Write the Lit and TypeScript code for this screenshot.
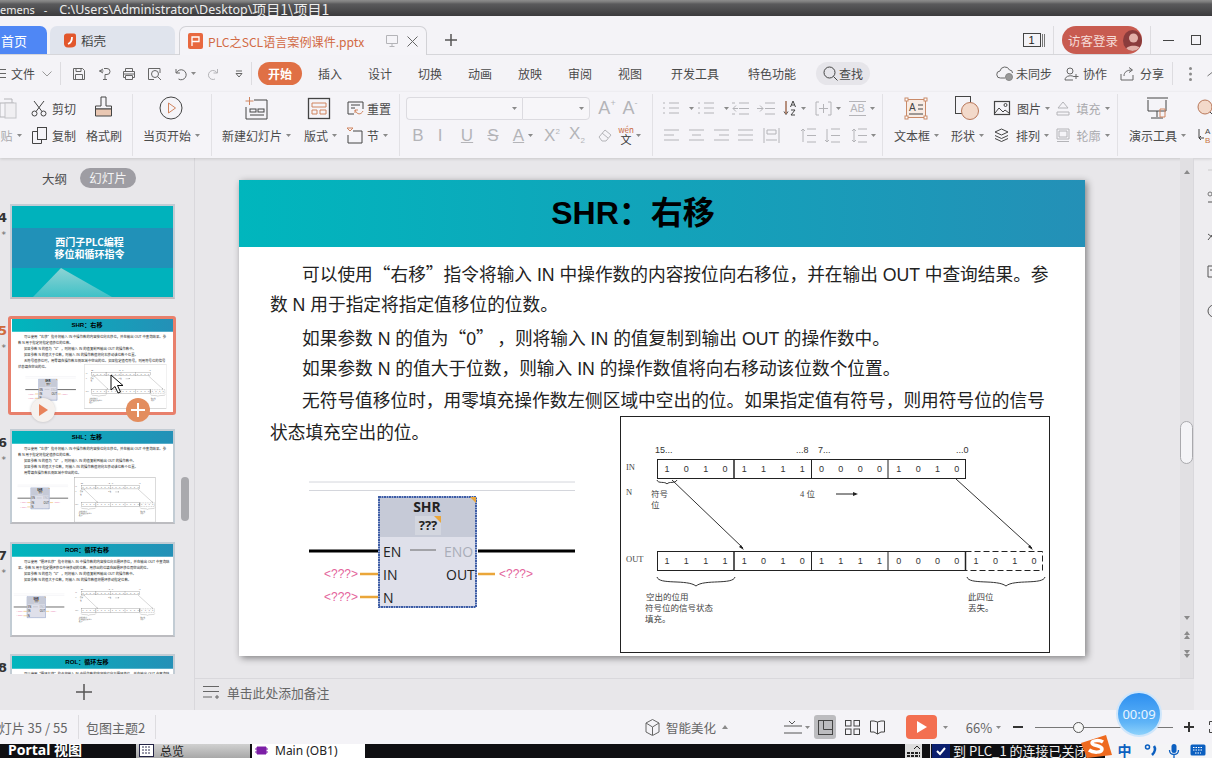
import { LitElement, html, css, svg, nothing } from 'lit';
import { customElement } from 'lit/decorators.js';

type Item = [number, number, unknown, string?];
const row = (items: Item[], start = 0, cls = 'rw') => {
  let p = start;
  return html`<div class=${cls}>${items.map(([x, w, c, k]) => {
    const m = x - p;
    p = x + w;
    return html`<span class="c ${k ?? ''}" style="margin-left:${m}px;width:${w}px">${c}</span>`;
  })}</div>`;
};
const I = (w: number, h: number, body: unknown, cls = '') =>
  html`<svg class="i ${cls}" width=${w} height=${h} viewBox="0 0 ${w} ${h}">${body}</svg>`;

const dn = I(5, 3, svg`<path class="f" d="M0 0h5L2.5 3z"/>`, 'nos');
const dnL = (t: string) => html`${t}<span class="dn">${dn}</span>`;
const T = '#e9c7b3';

const ic = {
  save: I(14, 14, svg`<path d="M1.5 1.5h9l2 2v9h-11zM4 1.5v3h5v-3M3.5 12.5v-5h7v5"/>`),
  brand: I(14, 14, svg`<path d="M6 1.5h3a3 3 0 0 1 0 6H7v5M1.5 4h4M5 2 1.5 4 5 6M5 12.5h4"/>`),
  print: I(14, 14, svg`<path d="M3.5 4V1.5h7V4M1.5 4.5h11v6h-2M3.5 10.500h-2v-6M3.500 8.500h7v4h-7zM1.5 7h11"/>`),
  prev: I(15, 14, svg`<path d="M13 6V1.5H1.500v11H7"/><circle cx="8" cy="7" r="3.500"/><path d="M10.500 9.500l3.500 3.500"/>`),
  undo: I(14, 14, svg`<path d="M2 2v4h4M2.500 6a5 5 0 1 1 2 6"/>`),
  redo: I(12, 14, svg`<path d="M10.500 2v4h-4M10 6a4.500 4.500 0 1 0-2 6"/>`, 'lt'),
  search: I(15, 15, svg`<circle cx="6.500" cy="6.500" r="5.500"/><path d="M10.500 10.500l4 4"/>`, 'dk'),
  cloud: I(18, 15, svg`<path d="M9 12H4.500a3.500 3.500 0 0 1-.5-7A5 5 0 0 1 13.500 4a3 3 0 0 1 3 3"/><circle cx="13" cy="11" r="3.500" class="ff"/>`),
  coop: I(15, 14, svg`<circle cx="6" cy="4" r="3"/><path d="M1 13c0-5 8-5 9-3M1 13h8M12 7v5M9.500 9.500h5"/>`),
  share: I(14, 14, svg`<path d="M1 7v6h12V8M4 9c0-4 3-6 8-6M9 .5l3.500 2.500L9 5.500"/>`),
  cut: I(16, 17, svg`<circle cx="3.500" cy="13.500" r="2.500"/><circle cx="12.500" cy="13.500" r="2.500"/><path d="M5 11.500 13 1M11 11.500 3 1"/>`, 'dk'),
  copy: I(15, 17, svg`<rect x="5.500" y=".5" width="9" height="12"/><path d="M5.500 4.500h-5v12h9v-4"/>`, 'dk'),
  paste: I(16, 24, svg`<path d="M4 3h8v18H0V7h14"/><rect x="5" y="7" width="11" height="15" class="pa"/>`, 'lt'),
  brush: I(19, 24, svg`<path d="M7 1h5v9h5.500v3H1.500v-3H7z"/><path d="M1.500 13h16v7h-16z" fill=${T}/>`, 'dk'),
  play: I(24, 24, svg`<circle cx="12" cy="12" r="11"/><path d="M9.500 7l7 5-7 5z" class="or"/>`, 'dk'),
  newS: I(23, 24, svg`<path d="M9 4h13v19H1V11"/><path class="or" d="M4.500 1v8M.5 5h8"/><rect x="5" y="13" width="6" height="3"/><rect x="13" y="13" width="6" height="3"/><path d="M5 19h14"/>`, 'dk'),
  layout: I(22, 21, svg`<rect x=".5" y=".5" width="21" height="20" stroke-width="1.300"/><path d="M4 5h14v4H4zM4 12h5v4H4zM12 12h6v4h-6z" class="or"/>`, 'dk'),
  reset: I(17, 15, svg`<path d="M7 13H1V1h15v7"/><path d="M4 4h9M4 7h4" /><path class="or" d="M8 9c2 5 6 5 8 1M8 9v3M8 9h3"/>`, 'dk'),
  sect: I(16, 17, svg`<path d="M1 8v8h14V4H6"/><path class="or" d="M0 1h6L3 4z"/>`, 'dk'),
  a: (s: string) => html`<span class="big">A<sup>${s}</sup></span>`,
  list1: I(22, 14, svg`<path d="M6 2h10M6 7h10M6 12h10M0 2h2M0 7h2M0 12h2"/>`, 'lt'),
  ind: I(19, 13, svg`<path d="M8 1h10M8 6.500h10M8 12h10M5 3.500 2 6.500l3 3M2 6.500h5M1 1h3M1 12h3"/>`, 'lt'),
  out: I(19, 13, svg`<path d="M8 1h10M8 6.500h10M8 12h10M3 3.500l3 3-3 3M0 6.500h6"/>`, 'lt'),
  sort: I(14, 16, svg`<path d="M3 1v13M1 11.500 3 14.500l2-3"/><path class="or" d="M3 1v13"/><path d="M7.500 7 10 1l2.500 6M8.500 5h3M8 10h4l-4 5h4"/>`, 'dk'),
  vfit: I(17, 15, svg`<path d="M4 1H1v13h3M13 1h3v13h-3M4 7.500h9M8.500 3v9"/>`, 'lt'),
  al: (a: number, b: number) => I(15, 12, svg`<path d="M0 1h15M${a} 6h${b}M0 11h15"/>`, 'lt'),
  dist: I(17, 15, svg`<path d="M1 0v15M16 0v15M4 2h9v4H4zM3 12h11"/>`, 'lt'),
  lsp: (d: string) => I(16, 15, svg`<path d="M7 1h9M7 7.500h9M7 14h9M3 1v13${d}"/>`, 'lt'),
  tb: I(22, 21, svg`<rect x="1.500" y="1.500" width="19" height="18" class="br"/><rect x="0" y="0" width="3" height="3" class="ff2"/><rect x="19" y="0" width="3" height="3" class="ff2"/><rect x="0" y="18" width="3" height="3" class="ff2"/><rect x="19" y="18" width="3" height="3" class="ff2"/><text x="4" y="13" class="it">A</text><path d="M13 7h5M13 11h5M4 16h14"/>`, 'dk'),
  shape: I(25, 24, svg`<rect x=".5" y=".5" width="15" height="17"/><circle cx="15" cy="15" r="8.500" class="pe"/>`, 'dk'),
  pic: I(16, 14, svg`<rect x=".5" y=".5" width="15" height="13" stroke-width="1.200"/><path d="M1 12l4-5 4 4 2-2 4 3"/><circle cx="11.500" cy="4" r="1.500"/>`, 'dk'),
  fill: I(14, 15, svg`<path d="M7 1 12 7H2zM1 11h12v3H1z"/>`, 'lt'),
  arr: I(15, 15, svg`<path d="M7.500 1l6.500 3-6.500 3L1 4zM1 7.500l6.500 3 6.500-3M1 10.500l6.500 3 6.500-3"/>`, 'dk'),
  ol: I(14, 15, svg`<path d="M1 1h12v10H1zM1 13.500h12" /><path d="M3 3h8v6H3z"/>`, 'lt'),
  demo: I(23, 24, svg`<path d="M1 2h21M2 4v11h18V4M11 15v6M5 22h12"/><path class="or" d="M14 21v-8h5v8z"/>`, 'dk'),
  find: I(16, 18, svg`<circle cx="8" cy="8" r="7" class="pe"/><path d="M13 13l4 4"/>`, 'dk'),
  rep: I(15, 16, svg`<path d="M1 2v9h5M3 9l-2 2 2 2"/><text x="7" y="7" class="it s">A</text><text x="7" y="16" class="it s or2">B</text>`, 'dk'),
};

const SHR = {
  title: 'SHR：右移',
  lines: [
    ['可以使用“右移”指令将输入 IN 中操作数的内容按位向右移位，并在输出 OUT 中查询结果。参', 1],
    ['数 N 用于指定将指定值移位的位数。', 0],
    ['如果参数 N 的值为“0”\u2009，则将输入 IN 的值复制到输出 OUT 的操作数中。', 1],
    ['如果参数 N 的值大于位数，则输入 IN 的操作数值将向右移动该位数个位置。', 1],
    ['无符号值移位时，用零填充操作数左侧区域中空出的位。如果指定值有符号，则用符号位的信号', 1],
    ['状态填充空出的位。', 0],
  ] as [string, number][],
  lad: [61, 290], dia: [381, 236], kind: 'shr',
};
const SHL = {
  title: 'SHL：左移',
  lines: [
    ['可以使用“左移”指令将输入 IN 中操作数的内容按位向左移位，并在输出 OUT 中查询结果。参', 1],
    ['数 N 用于指定将指定值移位的位数。', 0],
    ['如果参数 N 的值为“0”\u2009，则将输入 IN 的值复制到输出 OUT 的操作数中。', 1],
    ['如果参数 N 的值大于位数，则输入 IN 的操作数值将向左移动该位数个位置。', 1],
    ['用零填充操作数右侧区域中空出的位。', 1],
  ] as [string, number][],
  lad: [20, 272], dia: [326, 242], kind: 'shl',
};
const ROR = {
  title: 'ROR：循环右移',
  lines: [
    ['可以使用“循环右移”指令将输入 IN 中操作数的内容按位向右循环移位，并在输出 OUT 中查询结', 1],
    ['果。参数 N 用于指定循环移位中待移动的位数。用移出的位填充因循环移位而空出的位。', 0],
    ['如果参数 N 的值为“0”\u2009，则将输入 IN 的值复制到输出 OUT 的操作数中。', 1],
    ['如果参数 N 的值大于位数，则输入 IN 的操作数值将循环移动指定位数。', 1],
  ] as [string, number][],
  lad: [0, 250], dia: [326, 205], kind: 'ror',
};
const ROL = {
  title: 'ROL：循环左移',
  lines: [['可以使用“循环左移”指令将输入 IN 中操作数的内容按位向左循环移位，并在输出 OUT 中查询结', 1]] as [string, number][],
  lad: null, dia: null, kind: 'ror',
};
type SlideData = { title: string; lines: [string, number][]; lad: number[] | null; dia: number[] | null; kind: string };

const quoted = (s: string) =>
  s.split(/([“”])/).map((p) => (p === '“' || p === '”' ? html`<span class="q">${p}</span>` : p));

const ladder = html`<svg class="lad" width="290" height="145" viewBox="300 470 290 145">
  <path d="M309 482h266M309 490.500h266" stroke="#d4d6dc" fill="none"/>
  <rect x="379" y="497" width="97" height="110" fill="#dfe0ea" stroke="#3d5da6" stroke-width="2" stroke-dasharray="2 .5"/>
  <rect x="380" y="498" width="95" height="39" fill="#c6cad7"/>
  <path d="M470 497h6v6z" fill="#eaa63a"/>
  <text x="427" y="512" class="lb" text-anchor="middle">SHR</text>
  <rect x="415" y="516" width="26" height="19" fill="#d3d6df"/>
  <text x="428" y="530" class="lb sm" text-anchor="middle">???</text>
  <path d="M434 516h7v7z" fill="#eaa63a"/>
  <path d="M309 551h69M478 551h97" stroke="#000" stroke-width="3"/>
  <path d="M360 574h18M360 597h18M478 574h17" stroke="#eaa63a" stroke-width="2.500"/>
  <path d="M410 550h26" stroke="#666"/>
  <text x="383" y="557" class="lt1">EN</text><text x="444" y="557" class="lt1 gr">ENO</text>
  <text x="383" y="580" class="lt1">IN</text><text x="446" y="580" class="lt1">OUT</text>
  <text x="383" y="603" class="lt1">N</text>
  <text x="324" y="578" class="pk">&lt;???&gt;</text><text x="324" y="601" class="pk">&lt;???&gt;</text>
  <text x="499" y="578" class="pk">&lt;???&gt;</text>
</svg>`;

const bits = (s: string, y: number) =>
  [...s].map((b, i) => svg`<text x=${667 + 19.32 * i} y=${y} class="dg" text-anchor="middle">${b}</text>`);
const seps = (y: number, h: number) =>
  [734, 811.500, 888].map((x) => svg`<path d="M${x} ${y}v${h}" stroke="#222" stroke-width=${x === 734 ? 1.500 : 1}/>`);

const diagram = (kind: string) => html`<svg class="dia" width="430" height="237" viewBox="620 416 430 237">
  ${kind !== 'ror'
    ? svg`<rect x="620.500" y="416.500" width="429" height="236" fill="#fff" stroke="#222"/>`
    : nothing}
  <rect x="657.500" y="459.500" width="308" height="19" fill="#fff" stroke="#222"/>
  ${seps(459, 20)}
  ${bits('1010111100001010', 472)}
  <text x="655" y="453" class="dg">15...</text><text x="796" y="453" class="dg">...8</text>
  <text x="818" y="453" class="dg">7...</text><text x="956" y="453" class="dg">...0</text>
  <text x="626" y="470" class="sf">IN</text><text x="626" y="495" class="sf">N</text><text x="626" y="562" class="sf">OUT</text>
  <text x="651" y="497" class="sf">符号</text><text x="651" y="508" class="sf">位</text>
  <text x="800" y="497" class="sf">4 位</text>
  <path d="M836 494h20" stroke="#222" fill="none"/><path d="M858 494l-5-2v4z" fill="#222"/>
  <path d="M657 480c1 4 8 1 10 4 2-3 8 0 10-4" fill="none" stroke="#333"/>
  <path d="M672 480 743 548" stroke="#333" fill="none"/><path d="M744 550l-5-3 2-2z" fill="#222"/>
  <path d="M956 479 1032 548" stroke="#333" fill="none"/><path d="M1033 550l-5-3 2-2z" fill="#222"/>
  <rect x="657.500" y="551.500" width="308" height="19" fill="#fff" stroke="#222"/>
  ${seps(551, 20)}
  <path d="M965.500 551v20" stroke="#222" stroke-width="1.500"/>
  <rect x="965.500" y="551.500" width="77" height="19" fill="none" stroke="#222" stroke-dasharray="6 3"/>
  ${bits('11111010111100001010', 564)}
  <path d="M657 577c2 8 30 2 39 9 8-7 37-1 39-9M967 577c2 8 30 2 39 9 8-7 37-1 39-9" fill="none" stroke="#333"/>
  <text x="646" y="600" class="sf">空出的位用</text><text x="645" y="611" class="sf">符号位的信号状态</text><text x="645" y="622" class="sf">填充。</text>
  <text x="968" y="600" class="sf">此四位</text><text x="968" y="611" class="sf">丢失。</text>
</svg>`;

const slide = (d: SlideData) => html`<div class="slide">
  <div class="band">${d.title}</div>
  <div class="body">
    ${d.lines.map(([s, ind]) => html`<div class="ln ${ind ? 'in' : ''}">${quoted(s)}</div>`)}
  </div>
  ${d.lad ? html`<div class="free" style="left:${d.lad[0]}px;top:${d.lad[1]}px">${ladder}</div>` : nothing}
  ${d.dia ? html`<div class="free" style="left:${d.dia[0]}px;top:${d.dia[1]}px">${diagram(d.kind)}</div>` : nothing}
</div>`;

const thumb = (n: number, body: unknown, sel = false) => html`<div class="trow">
  <div class="num ${sel ? 'sel' : ''}"><b>${n}</b><i>*</i></div>
  <div class="thumb ${sel ? 'on' : ''}"><div class="tin">${body}</div></div>
</div>`;

const cover = html`<div class="cover">
  <svg class="covtri" width="161" height="91" viewBox="0 0 161 91">
    <defs><linearGradient id="tg" x1="0" y1="0" x2="0" y2="1"><stop offset="0" stop-color="#8ed3d4"/><stop offset="1" stop-color="#3fc1c7"/></linearGradient></defs>
    <path d="M21 91 49 62 100 91z" fill="url(#tg)"/>
  </svg>
  <div class="covband"><span>西门子PLC编程</span><span>移位和循环指令</span></div>
</div>`;

const scaled = (d: SlideData) => html`<div class="sc">${slide(d)}</div>`;

@customElement('app-root')
export class AppRoot extends LitElement {
  static styles = css`
    :host { display: block; width: 1212px; height: 758px; overflow: hidden; position: relative;
      font-family: "Noto Sans CJK SC", "Noto Sans", sans-serif; font-size: 12px; color: #4a4a4a; background: #f4f3f7; }
    * { box-sizing: border-box; }
    svg { display: block; flex: none; }
    .i { fill: none; stroke: #666; stroke-width: 1; overflow: visible; }
    .i.dk { stroke: #444; }
    .i.lt { stroke: #b4b4b8; }
    .i .f { fill: #8a8a8a; stroke: none; }
    .i .or { stroke: #d0845f; }
    .i .ff { fill: #999; stroke: #888; }
    .i .ff2 { fill: #fff; stroke: #c98a68; }
    .i .br { stroke: #c98a68; fill: #f8ece5; }
    .i .pe { fill: #f3d9ca; stroke: #b9785a; }
    .i .pa { fill: #f0eff2; stroke: #c4c4c8; }
    .i .it { font: 10px "Liberation Sans", sans-serif; fill: #444; stroke: none; }
    .i .it.s { font-size: 8px; }
    .i .it.or2 { fill: #c9743f; }
    .rw { display: flex; align-items: center; height: 27px; }
    .c { display: flex; align-items: center; justify-content: center; flex: none; white-space: nowrap; height: 100%; }
    .dn { margin-left: 4px; display: inline-flex; }
    .lite { color: #a9a9ad; }
    .vd { background: #dddce0; }

    .titlebar { height: 16px; overflow: hidden; color: #ededed; font: 11px/15px "Noto Sans", sans-serif; white-space: pre; display: flex; align-items: center;
      background: linear-gradient(#8d8d8d 0, #7a7a7a 2px, #5a5a5c 4px, #3b3b3d 16px); padding-top: 2px; }
    .titlebar .d { margin-left: 9px; }
    .titlebar .p { margin-left: 12px; font-size: 12.500px; }
    .titlebar .z { font: 14px/15px "Noto Sans CJK SC", sans-serif; }

    .tabs .rw { height: 39px; align-items: flex-end; border-bottom: 1px solid #d6d6da; }
    .tabs .c { height: 28px; }
    .t-home { background: #4f87f5; color: #fff; border-top-right-radius: 7px; font-size: 13px; justify-content: flex-start !important; }
    .t-home span { margin-left: 1px; }
    .t-dao { background: #e0e4ed; border-radius: 7px 7px 0 0; font-size: 12.5px; color: #444; justify-content: flex-start !important; padding-left: 12px; gap: 5px; }
    .t-doc { background: #f5f4f8; border: 1px solid #d2d2d6; border-bottom: 0; border-radius: 7px 7px 0 0; color: #d26a44; font-size: 12.100px;
      justify-content: flex-start !important; padding-left: 8px; gap: 5px; height: 29px !important; margin-bottom: -1px; }
    .pico { width: 15px; height: 16px; background: #e8683f; border-radius: 2px; color: #fff; display: flex; align-items: center; justify-content: center; }
    .gp { margin-left: auto; display: flex; align-items: center; gap: 9px; margin-right: 8px; }
    .login { background: #c85b50; border-radius: 14px; color: #f6dcd8; font-size: 12.500px; padding-left: 6px; justify-content: flex-start !important; gap: 2px; }
    .av { width: 21px; height: 21px; border-radius: 50%; background: #8a3c3c; overflow: hidden; margin-left: 3px; }
    .one { display: flex; align-items: center; gap: 1px; }
    .one b { border: 1px solid #444; width: 18px; height: 14px; font: 11px/12px "Liberation Sans"; text-align: center; color: #222; }

    .menu { height: 37px; }
    .menu .rw { height: 37px; font-size: 12px; }
    .menu .c { height: 23px; }
    .pill { background: #e07045; color: #fff; border-radius: 12px; font-weight: 700; }
    .find { background: #e6e5ea; border-radius: 12px; gap: 1px; }
    .hb { display: flex; flex-direction: column; gap: 3px; width: 100%; }
    .hb u { height: 1px; background: #666; display: block; }

    .ribbon { height: 66px; display: flex; background: #f5f4f8; box-shadow: 0 1px 3px rgba(0,0,0,.14); position: relative; }
    .grp { flex: none; height: 62px; margin-top: 2px; padding-top: 1px; border-right: 1px solid #e2e1e5; display: flex; flex-direction: column; gap: 1px; }
    .grp .rw { height: 26px; }
    .big { font: 18px/18px "Liberation Sans"; color: #b4b4b8; display: inline-flex; }
    .big sup { font-size: 9px; line-height: 9px; }
    .fmt { font: 17px/17px "Liberation Sans"; color: #b4b4b8; }
    .fmt sup, .fmt sub { font-size: 8px; line-height: 8px; }
    .combo { background: #f7f6f9; border: 1px solid #dcdbe0; height: 23px !important; }
    .combo.l { border-radius: 4px 0 0 4px; border-right: 0; justify-content: flex-end !important; padding-right: 5px; }
    .combo.r { border-radius: 0 4px 4px 0; justify-content: flex-end !important; padding-right: 5px; }
    .wen { display: flex; flex-direction: column; align-items: center; color: #333; font-size: 11px; line-height: 11px; }
    .wen small { color: #c8673c; font-size: 8px; line-height: 9px; }
    .abx { font: 11px/13px "Liberation Sans"; color: #b4b4b8; border-top: 1px solid #b4b4b8; border-bottom: 1px solid #b4b4b8; padding: 0 1px; }

    .main { height: 552px; display: flex; background: #e8e7ea; }
    .side { width: 195px; flex: none; border-right: 1px solid #d9d8dc; display: flex; flex-direction: column; }
    .stabs { height: 42px; display: flex; align-items: center; padding: 0 0 2px 42px; gap: 13px; font-size: 12.500px; }
    .stabs span:last-child { background: #9e9da3; color: #f4f4f4; border-radius: 10px; width: 56px; height: 20px; line-height: 20px; text-align: center; }
    .list { height: 474px; overflow: hidden; padding-top: 4px; display: flex; flex-direction: column; gap: 17.500px; position: relative; }
    .trow { display: flex; flex: none; height: 95px; }
    .num { width: 10px; flex: none; display: flex; flex-direction: column; align-items: flex-end; padding: 5px 4px 0 0; color: #333; font: 700 13px/18px "DejaVu Sans", sans-serif; }
    .num b { margin-right: -1px; }
    .num i { font-style: normal; font-size: 9px; line-height: 12px; margin-top: 2px; color: #666; font-weight: 400; }
    .num.sel { color: #d06a3c; }
    .thumb { width: 165px; height: 95px; border: 2px solid #c2ccd4; background: #fff; border-bottom-color: #bcbcc0; }
    .thumb.on { border: 3px solid #e8806c; border-radius: 3px; width: 168px; height: 99px; margin: -1px 0 0 -2px; padding: 0 0 0 1px; }
    .tin { width: 161px; height: 91px; overflow: hidden; position: relative; }
    .sc { width: 846px; height: 476px; transform: scale(.1903); transform-origin: 0 0; }
    .cover { width: 161px; height: 91px; background: #00b2bc; position: relative; overflow: hidden; }
    .covtri { position: absolute; left: 0; top: 0; }
    .covband { position: absolute; left: 0; right: 0; top: 22px; height: 40px; background: #2191b8; color: #fff; font: 700 10px/12px "Noto Sans CJK SC", sans-serif;
      display: flex; flex-direction: column; align-items: center; justify-content: center; padding-right: 6px; }
    .sbar { position: absolute; left: 181px; top: 277px; width: 8px; height: 44px; border-radius: 4px; background: #a9a9ad; }
    .addb { flex: 1; display: flex; align-items: center; justify-content: center; padding: 0 27px 0 0; }

    .center { flex: 1; min-width: 0; display: flex; flex-direction: column; }
    .edit { height: 520px; display: flex; }
    .canvas { width: 985px; flex: none; padding: 22px 0 0 44px; }
    .canvas .slide { box-shadow: 2px 2px 7px rgba(0,0,0,.45); }
    .vs { width: 14px; flex: none; background: #e1e0e3; border-right: 1px solid #d9d8dc; display: flex; flex-direction: column; align-items: center; padding: 12px 0 0 0; position: relative; }
    .vs .th { width: 13px; height: 43px; margin-top: 247px; border-radius: 7px; background: #f4f4f7; border: 1px solid #a9a9ad; }
    .vs .ar { margin-top: 152px; display: flex; flex-direction: column; gap: 11px; }
    .notes { flex: 1; border-top: 1px solid #d9d8dc; display: flex; align-items: center; gap: 8px; padding: 0 0 5px 8px; font-size: 12.800px; color: #666; }
    .rp { width: 18px; flex: none; background: #eeedf0; overflow: hidden; }

    .slide { width: 846px; height: 476px; background: #fff; position: relative; color: #222; font-family: "Liberation Sans", "Noto Sans CJK SC", sans-serif; }
    .band { height: 67px; background: linear-gradient(90deg, #00b6bd, #2490b7); color: #000; font-weight: 700; font-size: 32px; line-height: 67px; text-align: center; padding-right: 58px; }
    .body { padding: 10px 0 0 31px; font-size: 17.700px; line-height: 32px; text-spacing-trim: space-all; }
    .ln { white-space: nowrap; height: 32px; }
    .ln.in { padding-left: 32px; }
    .q { font-family: "Noto Sans CJK SC", sans-serif; }
    .free { position: absolute; }
    .lb { font: 700 14px "Open Sans", "Liberation Sans", sans-serif; fill: #222; }
    .lb.sm { font-size: 13px; }
    .lt1 { font: 14px "Open Sans", "Liberation Sans", sans-serif; fill: #222; }
    .lt1.gr { fill: #a9adb8; }
    .pk { font: 12px "Liberation Sans", sans-serif; fill: #e4649c; }
    .dg { font: 9px "Liberation Sans", sans-serif; fill: #333; }
    .sf { font: 8.500px "Liberation Serif", "Noto Sans CJK SC", serif; fill: #444; }

    .status { height: 34px; background: #f4f3f7; }
    .status .rw { height: 34px; color: #666; font-size: 13px; }
    .status .c { height: 24px; }
    .smart { font-size: 12.500px; }
    .active { background: #bcbcbf; border-radius: 3px; }
    .red { background: #f36f50; border-radius: 4px; }
    .slider { display: flex; align-items: center; position: relative; }
    .track { flex: 1; height: 1px; background: #777; }
    .knob { position: absolute; left: 1073px; top: 722px; width: 11px; height: 11px; border-radius: 50%; background: #f7f7f7; border: 1px solid #555; }
    .task { height: 14px; background: #0f0f12; overflow: hidden; }
    .task .rw { height: 14px; align-items: flex-start; font-size: 12px; }
    .task .c { height: 14px; align-items: flex-start; line-height: 13px; }
    .pt { color: #fff; font: 700 14px/13px "Noto Sans", "Noto Sans CJK SC", sans-serif; justify-content: flex-start !important; margin-top: -1px; }
    .tt { background: linear-gradient(#d0d0d0, #a8a8a8); color: #222; justify-content: flex-start !important; padding-left: 3px; gap: 6px; }
    .ot { background: #fff; color: #222; justify-content: flex-start !important; padding-left: 3px; gap: 7px; font-family: "Noto Sans", "Noto Sans CJK SC"; }
    .msg { color: #f0f0f0; justify-content: flex-start !important; font-size: 13px; }
    .tray { background: #f4f4f6; justify-content: flex-start !important; }
    .tr { display: flex; height: 14px; color: #0b5fc0; font-weight: 700; font-size: 14px; }
    .chk { background: #0b1f6e; }

    .timer { position: absolute; left: 1116px; top: 691px; width: 46px; height: 46px; border-radius: 50%; border: 2px solid #cfe6fb;
      background: linear-gradient(#2d8ff0, #5fb4f7 70%, #8ed2fb); color: #e9f5ff; font: 13px/42px "Noto Sans", sans-serif; text-align: center; }
    .sogou { position: absolute; left: 1080px; top: 735px; }
    .over { position: absolute; }
    .hplay { left: 31px; top: 398px; width: 24px; height: 24px; border-radius: 50%; background: #f5f1ee; box-shadow: 0 0 3px rgba(0,0,0,.2); display: flex; align-items: center; justify-content: center; }
    .hadd { left: 126px; top: 398px; width: 24px; height: 24px; border-radius: 50%; background: #e38d5e; display: flex; align-items: center; justify-content: center; }
    .cursor { left: 110px; top: 374px; }
  `;

  render() {
    const path = 'C:\\Users\\Administrator\\Desktop\\';
    return html`
      <div class="titlebar"><span>emens</span><span class="d">-</span><span class="p">${path}</span><span class="z">${'项目1\\项目1'}</span></div>
      <div class="tabs">${row([
        [0, 47, html`<span>首页</span>`, 't-home'],
        [50, 125, html`${I(14, 15, svg`<path d="M2 3c0-2 2-2.500 4-2.500h6c1.500 0 2 1 2 2.500v8c0 2-2 3.500-5 3.500H6c-3 0-4-2-4-4z" fill="#e2572c" stroke="none"/><path d="M6 11c3-1 4-3 4-7" stroke="#fff" stroke-width="1.800" fill="none"/>`, 'nos')}<span>稻壳</span>`, 't-dao'],
        [179, 248, html`<span class="pico">${I(9, 10, svg`<path d="M1 10V1h7v4.500H1" stroke="#fff" fill="none" stroke-width="1.300"/>`, 'nos')}</span><span>PLC之SCL语言案例课件.pptx</span>
          <span class="gp">${I(12, 12, svg`<path d="M.5 .5h11v8H.5zM6 8.500V12M3.500 11.500h5"/>`, 'lt')}${I(11, 11, svg`<path d="M.5 .5l10 10M10.500 .5l-10 10"/>`)}</span>`, 't-doc'],
        [445, 12, I(12, 12, svg`<path d="M6 0v12M0 6h12" stroke="#555" stroke-width="1.500"/>`), ''],
        [1023, 21, html`<span class="one"><b>1</b>${I(3, 14, svg`<path d="M.5 1v13M2.500 1v13" stroke="#777"/>`)}</span>`],
        [1053, 1, '', 'vd'],
        [1062, 80, html`<span>访客登录</span><span class="av">${I(21, 21, svg`<circle cx="10.500" cy="8" r="4.500" fill="#e2b0a8" stroke="none"/><path d="M2 21c1-7 16-7 17 0z" fill="#e2b0a8" stroke="none"/>`, 'nos')}</span>`, 'login'],
        [1150, 1, '', 'vd'],
        [1163, 11, I(11, 1, svg`<path d="M0 .5h11" stroke="#444"/>`)],
        [1191, 10, I(10, 10, svg`<rect x=".5" y=".5" width="9" height="9" stroke="#444"/>`)],
      ])}</div>

      <div class="menu">${row([
        [0, 6, html`<span class="hb"><u></u><u></u><u></u></span>`],
        [11, 24, '文件'],
        [42, 10, I(10, 6, svg`<path d="M.5 .5 5 5 9.500 .5" stroke="#999"/>`)],
        [60, 1, '', 'vd'],
        [72, 14, ic.save], [98, 14, ic.brand], [122, 14, ic.print], [147, 15, ic.prev], [174, 14, ic.undo],
        [191, 5, dn], [207, 12, ic.redo],
        [236, 6, I(6, 6, svg`<path d="M0 0h6M0 2.500h6L3 6z" stroke="#666"/>`)],
        [251, 1, '', 'vd'],
        [258, 44, '开始', 'pill'],
        [318, 24, '插入'], [368, 24, '设计'], [418, 24, '切换'], [468, 24, '动画'], [518, 24, '放映'], [568, 24, '审阅'], [618, 24, '视图'],
        [671, 48, '开发工具'], [748, 48, '特色功能'],
        [816, 54, html`${ic.search}<span>查找</span>`, 'find'],
        [996, 18, ic.cloud], [1016, 36, '未同步'],
        [1064, 15, ic.coop], [1083, 24, '协作'],
        [1120, 14, ic.share], [1140, 24, '分享'],
        [1172, 1, '', 'vd'],
        [1188, 4, I(3, 14, svg`<circle cx="1.500" cy="1.500" r="1.500" class="f"/><circle cx="1.500" cy="7" r="1.500" class="f"/><circle cx="1.500" cy="12.500" r="1.500" class="f"/>`)],
        [1207, 5, I(6, 4, svg`<path d="M.5 4 5 .5" stroke="#777"/>`)],
      ])}</div>

      <div class="ribbon">
        <div class="grp" style="width:133px">
          ${row([[0, 16, ic.paste, 'lite'], [31, 16, ic.cut], [52, 24, '剪切'], [94, 19, ic.brush]])}
          ${row([[2, 18, dnL('贴'), 'lite'], [32, 15, ic.copy], [52, 24, '复制'], [86, 36, '格式刷']])}
        </div>
        <div class="grp" style="width:79px">
          ${row([[159, 24, ic.play]], 133)}
          ${row([[143, 57, dnL('当页开始')]], 133)}
        </div>
        <div class="grp" style="width:188px">
          ${row([[245, 23, ic.newS], [308, 22, ic.layout], [347, 17, ic.reset], [367, 24, '重置']], 212)}
          ${row([[222, 69, dnL('新建幻灯片')], [304, 33, dnL('版式')], [347, 16, ic.sect], [367, 21, dnL('节')]], 212)}
        </div>
        <div class="grp" style="width:253px">
          ${row([[406, 116, dn, 'combo l'], [522, 68, dn, 'combo r'], [599, 16, ic.a('+')], [622, 16, ic.a('-')]], 400)}
          ${row([
            [411, 14, html`<b class="fmt">B</b>`], [434, 12, html`<i class="fmt">I</i>`], [460, 14, html`<u class="fmt">U</u>`], [486, 14, html`<s class="fmt">S</s>`],
            [512, 22, html`<u class="fmt">A</u><span class="dn">${dn}</span>`], [544, 16, html`<span class="fmt">X<sup>2</sup></span>`], [569, 16, html`<span class="fmt">X<sub>2</sub></span>`],
            [597, 15, I(14, 13, svg`<path d="M1 8 7 1l6 5-5 6H4zM4 4l6 5"/>`, 'lt')],
            [619, 14, html`<span class="wen"><small>wén</small><span>文</span></span>`], [636, 5, dn],
          ], 400)}
        </div>
        <div class="grp" style="width:230px">
          ${row([
            [664, 29, html`${ic.list1}<span class="dn">${dn}</span>`], [698, 30, html`${ic.list1}<span class="dn">${dn}</span>`],
            [731, 19, ic.ind], [757, 19, ic.out], [783, 23, html`${ic.sort}<span class="dn">${dn}</span>`],
            [815, 26, html`${ic.vfit}<span class="dn">${dn}</span>`],
            [849, 26, html`<span class="abx">AB</span><span class="dn">${dn}</span>`],
          ], 653)}
          ${row([
            [664, 15, ic.al(0, 10)], [689, 15, ic.al(3, 9)], [714, 15, ic.al(5, 10)], [738, 15, ic.al(0, 15)], [763, 17, ic.dist],
            [800, 16, ic.lsp('M1 3 3 1l2 2')], [824, 16, ic.lsp('M1 12l2 2 2-2')], [850, 26, html`${ic.lsp('M1 3 3 1l2 2M1 12l2 2 2-2')}<span class="dn">${dn}</span>`],
          ], 653)}
        </div>
        <div class="grp" style="width:235px">
          ${row([
            [905, 22, ic.tb], [955, 25, ic.shape], [994, 16, ic.pic], [1015, 37, dnL('图片')],
            [1056, 14, ic.fill], [1076, 34, dnL('填充'), 'lite'],
          ], 883)}
          ${row([
            [894, 45, dnL('文本框')], [951, 33, dnL('形状')], [994, 15, ic.arr], [1014, 37, dnL('排列')],
            [1056, 14, ic.ol], [1076, 34, dnL('轮廓'), 'lite'],
          ], 883)}
        </div>
        <div class="grp" style="width:94px;border-right:0">
          ${row([[1146, 23, ic.demo], [1197, 16, ic.find]], 1118)}
          ${row([[1129, 57, dnL('演示工具')], [1198, 14, ic.rep]], 1118)}
        </div>
      </div>

      <div class="main">
        <div class="side">
          <div class="stabs"><span>大纲</span><span>幻灯片</span></div>
          <div class="list">
            ${thumb(4, cover)}
            ${thumb(5, scaled(SHR), true)}
            ${thumb(6, scaled(SHL))}
            ${thumb(7, scaled(ROR))}
            ${thumb(8, scaled(ROL))}
            <div class="sbar"></div>
          </div>
          <div class="addb">${I(16, 16, svg`<path d="M8 0v16M0 8h16" stroke="#555" stroke-width="1.500"/>`)}</div>
        </div>
        <div class="center">
          <div class="edit">
            <div class="canvas">${slide(SHR)}</div>
            <div class="vs">
              ${I(6, 4, svg`<path class="f" d="M0 4h6L3 0z"/>`)}
              <div class="th"></div>
              <div class="ar">
                ${I(6, 4, svg`<path class="f" d="M0 0h6L3 4z"/>`)}
                ${I(6, 8, svg`<path class="f" d="M0 4h6L3 0zM0 8h6L3 4z"/>`)}
                ${I(6, 8, svg`<path class="f" d="M0 0h6L3 4zM0 4h6L3 8z"/>`)}
              </div>
            </div>
          </div>
          <div class="notes">
            ${I(16, 12, svg`<path d="M0 .5h16M0 5.500h16M0 11h9M12 11h4M14 9v4" stroke="#666"/>`)}
            <span>单击此处添加备注</span>
          </div>
        </div>
        <div class="rp">
          ${I(18, 170, svg`<path d="M14 12h4" stroke="#ccc"/><circle cx="16" cy="36" r="2" stroke="#777"/><path d="M14 44h4M14 82l4-5M14 76l4 3" stroke="#555"/><path d="M18 108h-4v11h4M16 112h2" stroke="#555"/><circle cx="20" cy="153" r="6" stroke="#555"/>`)}
        </div>
      </div>

      <div class="status">${row([
        [0, 66, '灯片 35 / 55'], [78, 1, '', 'vd'], [88, 55, '包图主题2'], [155, 1, '', 'vd'],
        [645, 15, I(15, 17, svg`<path d="M7.500 .5 14 4v9l-6.500 3.500L1 13V4zM1 4l6.500 4L14 4M7.500 8v8"/>`)],
        [665, 52, html`<span class="smart">智能美化</span>`],
        [722, 6, I(6, 4, svg`<path class="f" d="M0 4h6L3 0z"/>`)],
        [784, 18, I(18, 13, svg`<path d="M0 5h18M0 12h18M5 0l3 3 3-3" stroke="#555"/>`)],
        [805, 5, dn],
        [814, 22, I(15, 15, svg`<rect x=".5" y=".5" width="14" height="14" stroke="#444"/><path d="M5.500 .5v9M5.500 9.500h9" stroke="#444"/>`), 'active'],
        [845, 15, I(15, 15, svg`<rect x=".5" y=".5" width="5.500" height="5.500" stroke="#444"/><rect x="9" y=".5" width="5.500" height="5.500" stroke="#444"/><rect x=".5" y="9" width="5.500" height="5.500" stroke="#444"/><rect x="9" y="9" width="5.500" height="5.500" stroke="#444"/>`)],
        [870, 15, I(15, 15, svg`<path d="M7.500 2v12L4 12H.5V1H4zM7.500 2 11 1h3.500v11H11l-3.500 2" stroke="#444"/>`)],
        [906, 31, I(10, 12, svg`<path d="M0 0l10 6-10 6z" fill="#fff" stroke="none"/>`), 'red'],
        [942, 6, dn],
        [966, 26, '66%'],
        [995, 6, dn],
        [1013, 10, I(10, 2, svg`<path d="M0 1h10" stroke="#333" stroke-width="2"/>`)],
        [1035, 138, html`<span class="track"></span>`, 'slider'],
        [1184, 10, I(10, 10, svg`<path d="M5 0v10M0 5h10" stroke="#333" stroke-width="2"/>`)],
        [1209, 3, I(4, 12, svg`<path d="M4 .5H.5V4M.5 8v3.500H4" stroke="#444"/>`)],
      ], 0)}</div>

      <div class="task">${row([
        [8, 80, 'Portal 视图', 'pt'],
        [136, 114, html`${I(15, 13, svg`<rect x=".5" y=".5" width="14" height="12" fill="#fff" stroke="#224"/><path d="M3 3h9M3 6h9M3 9h9" stroke="#335" stroke-dasharray="2 1"/>`)}<span>总览</span>`, 'tt'],
        [252, 113, html`${I(13, 13, svg`<path d="M2 3h9v7H2zM0 5h2M0 8h2M11 5h2M11 8h2" fill="#7c1fa6" stroke="#7c1fa6"/>`)}<span>Main (OB1)</span>`, 'ot'],
        [905, 17, I(17, 14, svg`<rect x="0" y="0" width="17" height="14" fill="#ddd" stroke="none"/><path d="M2 9h13M2 12h13" stroke="#222" stroke-width="2" stroke-dasharray="3 1"/><path d="M9 5l3-3 3 3" stroke="#222"/>`)],
        [930, 1, '', 'vd'],
        [932, 18, I(14, 14, svg`<path d="M3 7l3 3 5-6" stroke="#fff" stroke-width="2"/>`), 'chk'],
        [953, 152, '到 PLC_1 的连接已关闭', 'msg'],
        [1105, 107, row([
          [1117, 15, '中'],
          [1145, 12, I(12, 12, svg`<circle cx="2.500" cy="3" r="2" stroke="#0b5fc0" stroke-width="1.500"/><path d="M9 2c2 3 1 6-2 9" stroke="#0b5fc0" stroke-width="2.500"/>`)],
          [1168, 12, I(12, 14, svg`<rect x="3.500" y="0" width="5" height="9" rx="2.500" fill="#0b5fc0" stroke="none"/><path d="M1.500 6c0 6 9 6 9 0M6 11v3" stroke="#0b5fc0" stroke-width="1.300"/>`)],
          [1190, 16, I(16, 12, svg`<rect x=".5" y=".5" width="15" height="11" rx="1.500" fill="#0b5fc0" stroke="none"/><path d="M3 3.500h10M3 6h10M5 9h6" stroke="#fff" stroke-dasharray="1.500 1"/>`)],
        ], 1105, 'tr'), 'tray'],
      ])}</div>

      <svg class="over cursor" width="14" height="21" viewBox="0 0 14 21">
        <path d="M1 1v15l4-3.500 3 6.500 2.500-1-3-6.500H13z" fill="#fff" stroke="#111"/>
      </svg>
      <div class="over hplay">${I(10, 12, svg`<path d="M1 0l9 6-9 6z" fill="#e8825a" stroke="none"/>`)}</div>
      <div class="over hadd">${I(14, 14, svg`<path d="M7 0v14M0 7h14" stroke="#fff" stroke-width="2"/>`)}</div>
      <div class="knob"></div>
      <div class="timer">00:09</div>
      <svg class="sogou" width="32" height="23" viewBox="0 0 32 23">
        <path d="M1 8 26 0l6 20-25 3z" fill="#ee6a1f"/>
        <path d="M23 7c-3-2-11-2-11 1 0 3 10 2 10 6 0 4-9 4-13 1" fill="none" stroke="#fff" stroke-width="3.500"/>
      </svg>
    `;
  }
}
